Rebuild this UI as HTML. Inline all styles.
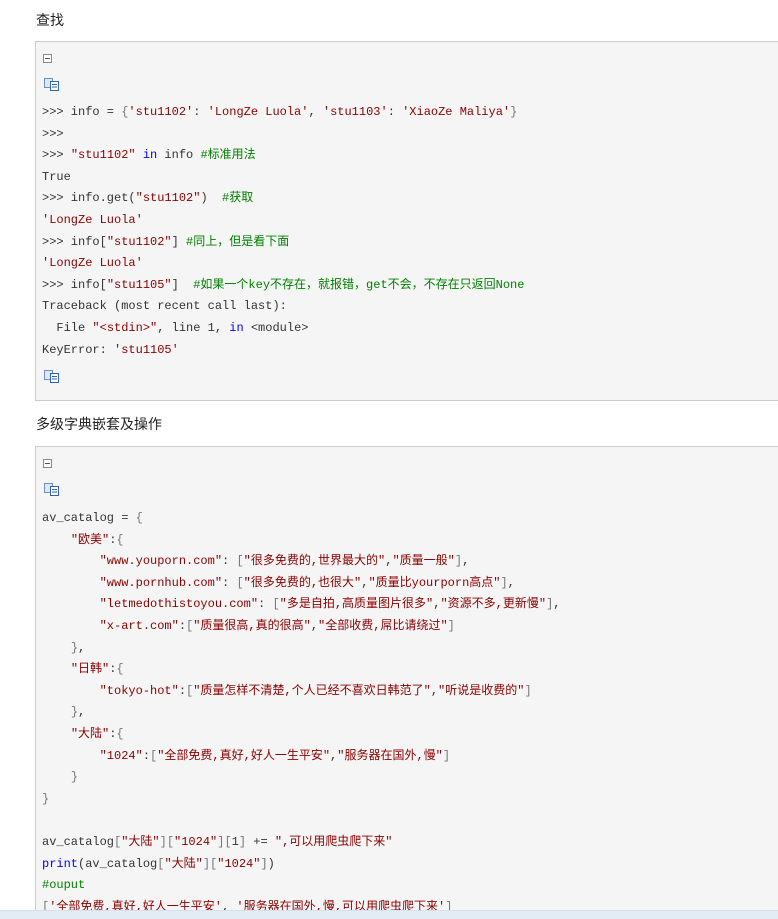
<!DOCTYPE html>
<html><head><meta charset="utf-8"><style>
html,body{margin:0;padding:0;background:#fff;width:778px;height:919px;overflow:hidden;position:relative}
body{font-family:"Liberation Sans","Noto Sans CJK SC",sans-serif;}
.h{position:absolute;left:36px;font-size:14px;color:#222}
.box{position:absolute;left:35px;width:760px;background:#f5f5f5;border:1px solid #ccc;}
pre{position:absolute;left:42px;margin:0;font-family:"Liberation Mono","Noto Sans CJK SC",monospace;font-size:12px;line-height:21.6px;color:#333}
.k{color:#0000ff}.s{color:#8b0000}.c{color:#008000}.p{color:#777}
.i{position:absolute}
.strip{position:absolute;left:0;top:910px;width:778px;height:9px;background:#e3ebf5;border-top:1px solid #d6e0ec}
</style></head><body>
<div class="h" style="top:10px">查找</div>
<div class="box" style="top:41px;height:358px"></div>
<svg class="i" style="left:43px;top:54px" width="9" height="9"><rect x="0.5" y="0.5" width="8" height="8" fill="#fff" stroke="#888"/><line x1="2" y1="4.5" x2="7" y2="4.5" stroke="#555"/></svg>
<svg class="i" style="left:44px;top:78px" width="16" height="13"><rect x="0.5" y="0.5" width="8" height="9" fill="#dde8f5" stroke="#6b8fc7"/><rect x="6.5" y="3.5" width="8" height="9" fill="#fff" stroke="#2f5fb0"/><line x1="8" y1="6.5" x2="13" y2="6.5" stroke="#2f5fb0"/><line x1="8" y1="9" x2="13" y2="9" stroke="#2f5fb0"/></svg>
<svg class="i" style="left:44px;top:370px" width="16" height="13"><rect x="0.5" y="0.5" width="8" height="9" fill="#dde8f5" stroke="#6b8fc7"/><rect x="6.5" y="3.5" width="8" height="9" fill="#fff" stroke="#2f5fb0"/><line x1="8" y1="6.5" x2="13" y2="6.5" stroke="#2f5fb0"/><line x1="8" y1="9" x2="13" y2="9" stroke="#2f5fb0"/></svg>
<pre style="top:102px">&gt;&gt;&gt; info = <span class="p">{</span><span class="s">'stu1102'</span>: <span class="s">'LongZe Luola'</span>, <span class="s">'stu1103'</span>: <span class="s">'XiaoZe Maliya'</span><span class="p">}</span>
&gt;&gt;&gt;
&gt;&gt;&gt; <span class="s">"stu1102"</span> <span class="k">in</span> info <span class="c">#标准用法</span>
True
&gt;&gt;&gt; info.get(<span class="s">"stu1102"</span>)  <span class="c">#获取</span>
<span class="s">'LongZe Luola'</span>
&gt;&gt;&gt; info[<span class="s">"stu1102"</span>] <span class="c">#同上，但是看下面</span>
<span class="s">'LongZe Luola'</span>
&gt;&gt;&gt; info[<span class="s">"stu1105"</span>]  <span class="c">#如果一个key不存在，就报错，get不会，不存在只返回None</span>
Traceback (most recent call last):
  File <span class="s">"&lt;stdin&gt;"</span>, line 1, <span class="k">in</span> &lt;module&gt;
KeyError: <span class="s">'stu1105'</span></pre>
<div class="h" style="top:414px">多级字典嵌套及操作</div>
<div class="box" style="top:446px;height:480px"></div>
<svg class="i" style="left:43px;top:459px" width="9" height="9"><rect x="0.5" y="0.5" width="8" height="8" fill="#fff" stroke="#888"/><line x1="2" y1="4.5" x2="7" y2="4.5" stroke="#555"/></svg>
<svg class="i" style="left:44px;top:483px" width="16" height="13"><rect x="0.5" y="0.5" width="8" height="9" fill="#dde8f5" stroke="#6b8fc7"/><rect x="6.5" y="3.5" width="8" height="9" fill="#fff" stroke="#2f5fb0"/><line x1="8" y1="6.5" x2="13" y2="6.5" stroke="#2f5fb0"/><line x1="8" y1="9" x2="13" y2="9" stroke="#2f5fb0"/></svg>
<pre style="top:508px">av_catalog = <span class="p">{</span>
    <span class="s">"欧美"</span>:<span class="p">{</span>
        <span class="s">"www.youporn.com"</span>: <span class="p">[</span><span class="s">"很多免费的,世界最大的"</span>,<span class="s">"质量一般"</span><span class="p">]</span>,
        <span class="s">"www.pornhub.com"</span>: <span class="p">[</span><span class="s">"很多免费的,也很大"</span>,<span class="s">"质量比yourporn高点"</span><span class="p">]</span>,
        <span class="s">"letmedothistoyou.com"</span>: <span class="p">[</span><span class="s">"多是自拍,高质量图片很多"</span>,<span class="s">"资源不多,更新慢"</span><span class="p">]</span>,
        <span class="s">"x-art.com"</span>:<span class="p">[</span><span class="s">"质量很高,真的很高"</span>,<span class="s">"全部收费,屌比请绕过"</span><span class="p">]</span>
    <span class="p">}</span>,
    <span class="s">"日韩"</span>:<span class="p">{</span>
        <span class="s">"tokyo-hot"</span>:<span class="p">[</span><span class="s">"质量怎样不清楚,个人已经不喜欢日韩范了"</span>,<span class="s">"听说是收费的"</span><span class="p">]</span>
    <span class="p">}</span>,
    <span class="s">"大陆"</span>:<span class="p">{</span>
        <span class="s">"1024"</span>:<span class="p">[</span><span class="s">"全部免费,真好,好人一生平安"</span>,<span class="s">"服务器在国外,慢"</span><span class="p">]</span>
    <span class="p">}</span>
<span class="p">}</span>

av_catalog<span class="p">[</span><span class="s">"大陆"</span><span class="p">][</span><span class="s">"1024"</span><span class="p">][</span>1<span class="p">]</span> += <span class="s">",可以用爬虫爬下来"</span>
<span class="k">print</span>(av_catalog<span class="p">[</span><span class="s">"大陆"</span><span class="p">][</span><span class="s">"1024"</span><span class="p">]</span>)
<span class="c">#ouput</span>
<span class="p">[</span><span class="s">'全部免费,真好,好人一生平安'</span>, <span class="s">'服务器在国外,慢,可以用爬虫爬下来'</span><span class="p">]</span></pre>
<div class="strip"></div>
</body></html>
